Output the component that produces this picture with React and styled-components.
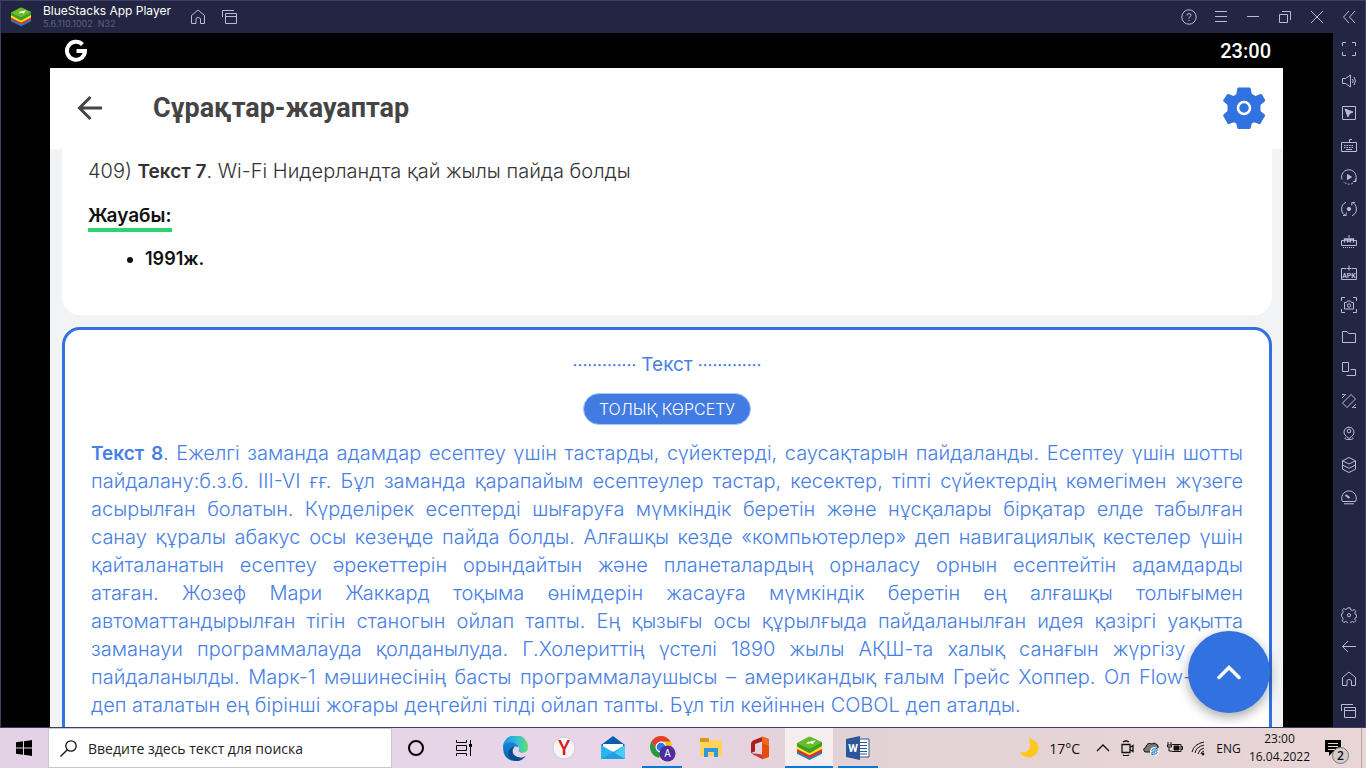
import React from "react";
import styled, { createGlobalStyle } from "styled-components";

const GlobalStyle = createGlobalStyle`
  * { box-sizing: border-box; }
  html, body, #root { height: 100%; }
  body { margin: 0; overflow: hidden; font-family: Inter, "Liberation Sans", sans-serif; }
  button { font: inherit; color: inherit; border: 0; background: none; padding: 0; margin: 0; cursor: pointer; }
  svg { display: block; flex: none; }
`;

const Desktop = styled.div`
  display: flex;
  flex-direction: column;
  height: 100vh;
`;

const EmulatorWindow = styled.div`
  flex: 1;
  min-height: 0;
  display: flex;
  flex-direction: column;
  background: #232642;
  border: 1px solid #3b3f63;
`;

const TitleBar = styled.header`
  display: flex;
  align-items: center;
  height: 32px;
  flex: none;
  color: #b9bbd6;
`;

const Brand = styled.div`
  display: flex;
  align-items: center;
  gap: 12px;
  padding-left: 10px;
  width: 181px;
`;

const BrandName = styled.h1`
  margin: 0;
  font: 400 12px/14px Inter, sans-serif;
  color: #fff;
  white-space: nowrap;
`;

const BrandVersion = styled.p`
  margin: 0;
  font: 400 9px/12px Inter, sans-serif;
  color: #5b5f86;
`;

const WindowControls = styled.div`
  display: flex;
  margin-left: auto;
`;

const IconButton = styled.button`
  display: flex;
  align-items: center;
  justify-content: center;
  width: 32px;
  height: 32px;
  color: #b9bbd6;
`;

const WindowBody = styled.div`
  flex: 1;
  min-height: 0;
  display: flex;
`;

const SideBar = styled.nav`
  display: flex;
  flex-direction: column;
  justify-content: space-between;
  width: 32px;
  flex: none;
`;

const SideGroup = styled.div`
  display: flex;
  flex-direction: column;
`;

const DeviceFrame = styled.div`
  flex: 1;
  min-width: 0;
  display: flex;
  padding: 0 50px 0 49px;
  background: #000;
`;

const Device = styled.main`
  position: relative;
  flex: 1;
  min-width: 0;
  display: flex;
  flex-direction: column;
  overflow: hidden;
  background: #f2f3f5;
`;

const StatusBar = styled.div`
  display: flex;
  align-items: center;
  justify-content: space-between;
  height: 35px;
  flex: none;
  padding: 0 12px 0 14px;
  background: #000;
  color: #fff;
  font: 500 20px/34px Roboto, sans-serif;
`;

const AppBar = styled.div`
  display: flex;
  align-items: center;
  height: 81px;
  flex: none;
  padding: 0 18px 2px 24px;
  background: #fff;
`;

const BackButton = styled.button`
  display: flex;
  align-items: center;
  justify-content: center;
  width: 32px;
  height: 40px;
`;

const AppTitle = styled.h2`
  margin: 0 auto 0 47px;
  font: 700 27px/32px Roboto, sans-serif;
  color: #444;
`;

const Feed = styled.div`
  flex: 1;
  min-height: 0;
  display: flex;
  flex-direction: column;
  gap: 12px;
  padding: 0 11px 0 12px;
  font-size: 20px;
  line-height: 28px;

  > * { flex: none; }
`;

const AnswerCard = styled.article`
  padding: 8px 26px 42px;
  background: #fff;
  border-radius: 0 0 18px 18px;
  color: #111;
`;

const Question = styled.p`
  margin: 0 0 17px;
  font-weight: 300;
  color: #333;

  strong { font-size: 19px; line-height: 20px; font-weight: 600; }
`;

const AnswerLabel = styled.h3`
  width: fit-content;
  margin: 0 0 13px;
  padding-top: 2px;
  font-size: 19px;
  line-height: 24px;
  font-weight: 600;
  border-bottom: 4px solid #2dd36f;
`;

const AnswerList = styled.ul`
  margin: 0;
  padding-left: 57px;
  font-size: 18px;
  font-weight: 600;
`;

const TextCard = styled.article`
  display: flex;
  flex-direction: column;
  align-items: center;
  gap: 14px;
  padding: 21px 26px 40px;
  background: #fff;
  border: 3px solid #3171e0;
  border-radius: 18px;
  color: #4880e4;
`;

const CardHeading = styled.h3`
  display: flex;
  gap: 5px;
  margin: 0;
  font-size: 19px;
  line-height: 28px;
  font-weight: 400;
`;

const Dots = styled.span`
  font-size: 17px;
`;

const ShowButton = styled.button`
  height: 32px;
  padding: 0 15px;
  border-radius: 16px;
  background: #427ce3;
  border: 1px solid #a9c4f4;
  color: #fff;
  font-size: 16px;
  line-height: 28px;
  font-weight: 300;
`;

const Passage = styled.p`
  align-self: stretch;
  margin: 0;
  font-weight: 300;

  strong { font-size: 19px; line-height: 20px; font-weight: 600; }
`;

const Line = styled.span`
  display: block;
  white-space: nowrap;
  text-align-last: ${(p) => (p.$last ? "left" : "justify")};
`;

const ScrollTop = styled.button`
  position: absolute;
  right: 13px;
  bottom: 14px;
  display: flex;
  align-items: center;
  justify-content: center;
  width: 82px;
  height: 82px;
  border-radius: 50%;
  background: #3171e0;
  box-shadow: 0 4px 12px rgba(0, 0, 0, 0.35);
`;

const TaskBar = styled.footer`
  display: flex;
  height: 40px;
  flex: none;
  background: linear-gradient(90deg, #e3d2e6 0%, #e8d5e8 45%, #e2d2d6 62%, #e9d5d6 100%);
  color: #111;
  font-family: "Open Sans", "Noto Sans", sans-serif;
`;

const TaskButton = styled.button`
  display: flex;
  align-items: center;
  justify-content: center;
  width: 48px;
  height: 40px;
  background: ${(p) => (p.$active ? "#f4eeee" : "transparent")};
`;

const SearchBox = styled.label`
  display: flex;
  align-items: center;
  gap: 11px;
  width: 344px;
  padding-left: 11px;
  background: #fff;
  border: 1px solid #c8c8c8;
`;

const SearchInput = styled.input`
  flex: 1;
  min-width: 0;
  height: 28px;
  padding: 0;
  border: 0;
  outline: 0;
  background: none;
  font: 400 14px/20px "Open Sans", "Noto Sans", sans-serif;

  &::placeholder { color: #222; opacity: 1; }
`;

const PinnedApps = styled.div`
  display: flex;
  gap: 1px;
  padding-left: 3px;
`;

const AppButton = styled(TaskButton)`
  position: relative;

  &::after {
    content: "";
    position: absolute;
    bottom: 0;
    left: ${(p) => (p.$active ? "0" : "4px")};
    right: ${(p) => (p.$active ? "0" : "4px")};
    height: 2px;
    background: ${(p) => (p.$running ? "#0a78d6" : "transparent")};
  }
`;

const Tray = styled.div`
  display: flex;
  align-items: center;
  margin-left: auto;
  font-size: 12px;
`;

const Weather = styled.button`
  display: flex;
  align-items: center;
  gap: 10px;
  padding-right: 11px;
  font-size: 14px;
`;

const TrayButton = styled.button`
  display: flex;
  align-items: center;
  justify-content: center;
  width: 24px;
  height: 40px;
`;

const Language = styled.button`
  width: 35px;
  height: 40px;
  font-size: 12px;
`;

const Clock = styled.button`
  width: 67px;
  font-size: 12px;
  line-height: 18px;
`;

const ShowDesktop = styled.button`
  width: 5px;
  height: 40px;
  border-left: 1px solid #b5a5a8;
`;

const Notifications = styled(TrayButton)`
  position: relative;
  width: 48px;
  padding-right: 8px;
`;

const Count = styled.span`
  position: absolute;
  right: 12px;
  bottom: 4px;
  width: 17px;
  height: 17px;
  border: 1px solid #777;
  border-radius: 50%;
  background: #d5cccc;
  font-size: 12px;
  font-weight: 600;
  line-height: 15px;
`;

/* Thin line icon on a 16px grid, used by the window chrome. */
const Glyph = ({ children, size = 16 }) => (
  <svg width={size} height={size} viewBox="0 0 16 16" fill="none" stroke="currentColor" strokeWidth="1" aria-hidden="true">
    {children}
  </svg>
);

const houseGlyph = <path d="M1.500 6.500 8 1l6.500 5.500V14.500h-4V10Q10 8.500 8 8.500T6 10v4.500H1.500Z" />;
const recentsGlyph = <path d="M.5 8V1.500H12M3.500 4.500h11v10h-11ZM3.500 7.500h11" />;

const sideTools = [
  ["Full screen", <path d="M1.500 5V1.500H5M11 1.500h3.500V5M14.500 11v3.500H11M5 14.500H1.500V11" />],
  ["Volume", <path d="M1.500 5.500h3L9.500 2v12l-5-3.500h-3ZM11.500 6q1.500 2 0 4M13 4q3 4 0 8" />],
  ["Lock cursor", <><path d="M1.500 1.500h13v13h-13Z" /><path d="m4 4 8 3-3.500 1.500L7 12Z" fill="currentColor" /></>],
  ["Game controls", <><path d="M.5 5.500h15v9H.500ZM8.500 5V2.500H11" /><path d="M3 8.500h10M3 10.500h10" strokeDasharray="1.500 1" /><path d="M5 12.500h6" /></>],
  ["Sync", <><path d="M1 10.500A7.300 7.300 0 1 1 14 12" /><path d="M12 14Q8 17 2 12.500" strokeDasharray="2 1.500" /><path d="M6.500 5.500v5L10.500 8Z" fill="currentColor" /><path d="M12 12.500h3v-3" /></>],
  ["Macro recorder", <><path d="M5 1.300A7.300 7.300 0 0 0 5 14.700M2 14.500h3.200v-3M11 14.700A7.300 7.300 0 0 0 11 1.300M14 1.500h-3.200v3" /><circle cx="8" cy="8" r="1.700" fill="currentColor" /></>],
  ["Multi instance sync", <><path d="M3 7.500H.5v5h15v-5H13M8 5V2" /><path d="M3.500 9.500V6h9v3.500M6.500 9.500V6M9.500 9.500V6M5 6v2M8 6v3M11 6v2" strokeWidth="1.300" /><path d="M2 14.500h12" strokeDasharray="1 1" /></>],
  ["Install APK", <><path d="M5 3.500H.5v11h15v-11H11M8 .5v5M5.500 3.500h5" /><text x="8" y="12.500" fontSize="7" fontWeight="700" fontFamily="Roboto" textAnchor="middle" fill="currentColor" stroke="none">APK</text></>],
  ["Screenshot", <><path d="M.5 4V.5H4M12 .5h3.500V4M15.500 12v3.500H12M4 15.500H.5V12M3.500 5.500h2l1-1.500h3l1 1.500h2v6.500h-9Z" /><circle cx="8" cy="8.500" r="1.700" /></>],
  ["Media folder", <path d="M1.500 13.500v-11H6L7.500 4.500h7v9Z" />],
  ["Multi instance", <path d="M1.500 1.500h6v9h-6ZM9.500 8.500h5v6h-9" />],
  ["Rotate", <path d="M10 1.500 14.500 6 6 14.500 1.500 10ZM1 5l4-4M1 1.500h2.500M11 15l4-4M12.500 14.500H15" />],
  ["Location", <><path d="M5.500 11.500A5 5 0 1 1 10.500 11.500L8 13.500ZM4.500 12.500q-2 2 3.500 2t3.500-2" /><circle cx="8" cy="6" r="1.800" /></>],
  ["Layers", <path d="m8 .5 6.500 3.300L8 7 1.500 3.800ZM1.500 3.800v8.400L8 15.500l6.500-3.300V3.800M1.500 8 8 11.300 14.500 8" />],
  ["Performance", <><path d="M1.500 12.500A7.300 7.300 0 1 1 14.500 12.500ZM3 14.800h10" /><path d="m4.500 6 4 3" strokeWidth="2" /></>],
];

const sideNavigation = [
  ["Settings", <><path d="M6.800.8h2.400l.5 2 1.700.7 1.700-1 1.700 1.700-1 1.700.7 1.700 1.200.3v2.400l-1.200.3-.7 1.500 1 1.700-1.700 1.700-1.700-1-1.700.7-.5 1.500H6.800l-.5-1.500-1.700-.7-1.700 1-1.700-1.700 1-1.700-.7-1.500L.5 9.100V6.900l1-.3.700-1.700-1-1.700 1.700-1.700 1.700 1 1.700-.7Z" strokeLinejoin="round" /><circle cx="8" cy="8.200" r="1.600" /></>],
  ["Back", <path d="M15 7.500H1.500M7 2 1.500 7.500 7 13" />],
  ["Home", houseGlyph],
  ["Recent apps", recentsGlyph],
];

const windowControls = [
  ["Help", <><circle cx="8" cy="8" r="7.200" /><path d="M6 6.500q0-2 2-2t2 1.700Q10 7.500 8 8.500v1M8 11v1" /></>],
  ["Menu", <path d="M2 2.500h12M2 7.500h12M2 12.500h12" />],
  ["Minimize", <path d="M2 7.500h12" />],
  ["Restore", <path d="M2.500 5.500h8v8h-8ZM5 2.500h8.500V11" />],
  ["Close", <path d="m2 2 12 12M14 2 2 14" />],
  ["Collapse sidebar", <path d="M8 2 2.500 8 8 14M14 2 8.500 8l5.500 6" />],
];

const BlueStacksLogo = ({ size }) => (
  <svg width={size} height={size} viewBox="0 0 24 24" aria-hidden="true">
    <path d="m0 14 12 6 12-6v3l-12 6-12-6Z" fill="#1783c9" />
    <path d="m0 11.500 12 6 12-6V15l-12 6-12-6Z" fill="#e92b31" />
    <path d="m0 9 12 6 12-6v3.500l-12 6-12-6Z" fill="#fbe51d" />
    <path d="M0 7 11 1q1-.5 2 0l11 5v3.500L13 16q-1 .5-2 0L0 10Z" fill="#3f9e23" />
    <path d="M0 7 11 1q1-.5 2 0l11 5-11 6q-1 .5-2 0Z" fill="#68bd2b" />
    <path d="m9 6 9-2-3 4-2-1-5 1 3-1.500Z" fill="#fff" />
  </svg>
);

const GoogleMark = () => (
  <svg width="24" height="24" viewBox="0 0 24 24" fill="none" stroke="#fff" strokeWidth="4" aria-label="Google">
    <path d="M18.500 5.500A9 9 0 1 0 21 12h-8.500" />
  </svg>
);

const SettingsGear = () => (
  <svg width="42" height="42" viewBox="0 0 42 42" aria-hidden="true">
    <path d="M15.500.5h11q1 0 1.200 1l1 5.300 3.800 2.200 5-1.900q1-.4 1.500.5l3 5.200q.5.900-.3 1.600L37.500 18v6l4.200 3.500q.8.700.3 1.600l-4.500 7.500q-.5.900-1.500.5l-5-1.900-2.300 1.300-1 4.500q-.2 1-1.200 1h-11q-1 0-1.200-1l-1-4.500L11 35.200 6 37.100q-1 .4-1.500-.5L.3 29q-.5-.9.3-1.600L4.500 24v-6L.6 14.500q-.8-.7-.3-1.600L4 7.500q.5-.9 1.500-.5l5 1.900 2.800-1.700 1-5.700q.2-1 1.200-1Z" fill="#3171e0" />
    <circle cx="21" cy="21" r="6" fill="none" stroke="#fff" strokeWidth="2.500" />
  </svg>
);

const EdgeLogo = () => (
  <svg width="25" height="25" viewBox="0 0 24 24">
    <defs>
      <linearGradient id="edgeTop" x1="0" x2="1"><stop stopColor="#1b91dd" /><stop offset=".6" stopColor="#36c3cf" /><stop offset="1" stopColor="#66df65" /></linearGradient>
      <linearGradient id="edgeBody" x2="0" y2="1"><stop stopColor="#1686da" /><stop offset="1" stopColor="#0a62b0" /></linearGradient>
    </defs>
    <path d="M0 11A12 12 0 0 1 24 11q0 5-6 5-4 0-3-2 1-5-3-5-7-2-12 2Z" fill="url(#edgeTop)" />
    <path d="M0 12q0-6 7-6 6 0 8 5Q9 8 9 14q1 7 9 7 2 0 4-2-4 5-10 5Q1 24 0 12Z" fill="url(#edgeBody)" />
    <path d="M11 10q-5 7 2 10 5 2 9-1-4 5-9 5-8-1-8-8 1-5 6-6Z" fill="#0b4c91" />
    <path d="M12 10.500q3.500-.5 3.200 2.500-1.200 2 .3 2.700 3 1.500 7 .3-2 3-6 2.800-6.500-.3-6.300-5.800.3-2 1.800-2.500Z" fill="#e7d6e7" />
  </svg>
);

const YandexLogo = () => (
  <svg width="24" height="24" viewBox="0 0 24 24">
    <circle cx="12" cy="12" r="11" fill="#f7f5f6" stroke="#d6cbd5" />
    <text x="12" y="19" textAnchor="middle" fontFamily="Roboto" fontWeight="500" fontSize="20" fill="#d8201f">Y</text>
  </svg>
);

const MailLogo = () => (
  <svg width="24" height="24" viewBox="0 0 24 24">
    <path d="M0 9 12 0l12 9v5H0Z" fill="#075ea9" />
    <path d="M2 8h20v7H2Z" fill="#fff" />
    <path d="m0 9 12 7 12-7v14H0Z" fill="#29b6ed" />
    <path d="M24 9 7 23h17Z" fill="#4bccf5" />
    <path d="m0 23 12-7 12 7Z" fill="#1f9fe0" />
  </svg>
);

const ChromeLogo = () => (
  <svg width="28" height="28" viewBox="0 0 28 28">
    <circle cx="13" cy="13" r="11" fill="#f9c20a" />
    <path d="M3.500 7.500A11 11 0 0 1 22.500 7.500H13Q8 8 8 14Z" fill="#e53c31" />
    <path d="M3.500 7.500 9 16q2 3 5 2l-3 5.800A11 11 0 0 1 3.500 7.500" fill="#229a4a" />
    <circle cx="13" cy="13" r="5.500" fill="#fff" />
    <circle cx="13" cy="13" r="4.300" fill="#2b78e8" />
    <circle cx="19.500" cy="19.500" r="8" fill="#4e2da0" />
    <text x="19.500" y="23" textAnchor="middle" fontFamily="Roboto" fontSize="10" fill="#fff">A</text>
  </svg>
);

const ExplorerLogo = () => (
  <svg width="22" height="22" viewBox="0 0 22 22">
    <path d="M0 1h9v4H0Z" fill="#d99a13" />
    <path d="M0 5h9l1-2h12v16H0Z" fill="#ffd45d" />
    <path d="M4 11h14v9h-4v-5H8v5H4Z" fill="#3395dc" />
  </svg>
);

const OfficeLogo = () => (
  <svg width="20" height="24" viewBox="0 0 20 24">
    <path d="M12 1 3 4.500Q1 5.500 1 8v9l4-1.500V8l7-2.500Z" fill="#a81f1e" />
    <path d="M1 17.500 12 23V18.500l-7-1Z" fill="#c33a42" />
    <path d="m12 .5 7 2.500v18l-7 2.500Z" fill="#e64a0e" />
    <path d="m12 .5 7 2.500v7l-7-3Z" fill="#ee6a20" />
  </svg>
);

const WordLogo = () => (
  <svg width="24" height="24" viewBox="0 0 24 24">
    <path d="M12 3h11v18H12Z" fill="#fff" stroke="#2b579a" />
    <path d="M14 6.500h7M14 9.500h7M14 12.500h7M14 15.500h7M14 18h7" stroke="#2b579a" />
    <path d="M0 3 14 0v24L0 21Z" fill="#2b579a" />
    <text x="7" y="16" textAnchor="middle" fontFamily="Roboto" fontWeight="700" fontSize="11" fill="#fff">W</text>
  </svg>
);

const pinned = [
  ["Microsoft Edge", <EdgeLogo />],
  ["Yandex Browser", <YandexLogo />],
  ["Mail", <MailLogo />],
  ["Google Chrome", <ChromeLogo />, true],
  ["Explorer", <ExplorerLogo />],
  ["Office", <OfficeLogo />],
  ["BlueStacks", <BlueStacksLogo size={25} />, true, true],
  ["Word", <WordLogo />, true],
];

const trayIcons = [
  ["Show hidden icons", <path d="m2 11 6-6 6 6" strokeWidth="1.400" />],
  ["Meet now", <path d="M3 4.500h8v8H3ZM11 7.500l3-2v6l-3-2M4 2q3-2 6 0M4 15q3 1.500 6 0" strokeWidth="1.300" />],
  ["OneDrive", <><path d="M2 12q-3-3 1-5 1-5 6-3 2-2 4 0 3 1 2 4l-4 4Z" fill="#777" /><circle cx="11.500" cy="11.500" r="4.500" fill="#e8f4fc" stroke="none" /><path d="M8.500 11q1-3 4.500-2l1-1v3h-3M14.500 12q-1 3-4.500 2l-1 1v-3h3" stroke="#0b73c9" /></>],
  ["Battery", <><path d="M5 4.500h9v7H5M14 6.500h1.500v3H14M2 7v4h3M1 2v3M4 2v3M.5 5h4v2h-4Z" /><path d="M7 6h5v4H7Z" fill="currentColor" /></>],
  ["Network", <><path d="M1 12Q3 4 13 2M4 13q1-6 9-8M7 14q1-5 6-6M10 14q0-2 3-3" /><circle cx="12" cy="14" r="1" fill="currentColor" /></>],
];

const passageLines = [
  <><strong>Текст 8</strong>. Ежелгі заманда адамдар есептеу үшін тастарды, сүйектерді, саусақтарын пайдаланды. Есептеу үшін шотты</>,
  "пайдалану:б.з.б. III-VI ғғ. Бұл заманда қарапайым есептеулер тастар, кесектер, тіпті сүйектердің көмегімен жүзеге",
  "асырылған болатын. Күрделірек есептерді шығаруға мүмкіндік беретін және нұсқалары бірқатар елде табылған",
  "санау құралы абакус осы кезеңде пайда болды. Алғашқы кезде «компьютерлер» деп навигациялық кестелер үшін",
  "қайталанатын есептеу әрекеттерін орындайтын және планеталардың орналасу орнын есептейтін адамдарды",
  "атаған. Жозеф Мари Жаккард тоқыма өнімдерін жасауға мүмкіндік беретін ең алғашқы толығымен",
  "автоматтандырылған тігін станогын ойлап тапты. Ең қызығы осы құрылғыда пайдаланылған идея қазіргі уақытта",
  "заманауи программалауда қолданылуда. Г.Холериттің үстелі 1890 жылы АҚШ-та халық санағын жүргізу үшін",
  "пайдаланылды. Марк-1 мәшинесінің басты программалаушысы – американдық ғалым Грейс Хоппер. Ол Flow-Matic",
  "деп аталатын ең бірінші жоғары деңгейлі тілді ойлап тапты. Бұл тіл кейіннен COBOL деп аталды.",
];

const GlyphButton = ({ label, children }) => (
  <IconButton aria-label={label}><Glyph>{children}</Glyph></IconButton>
);

export default function App() {
  return (
    <Desktop>
      <GlobalStyle />
      <EmulatorWindow>
        <TitleBar>
          <Brand>
            <BlueStacksLogo size={20} />
            <div>
              <BrandName>BlueStacks App Player</BrandName>
              <BrandVersion>5.6.110.1002&nbsp; N32</BrandVersion>
            </div>
          </Brand>
          <GlyphButton label="Home">{houseGlyph}</GlyphButton>
          <GlyphButton label="Recent apps">{recentsGlyph}</GlyphButton>
          <WindowControls>
            {windowControls.map(([label, glyph]) => <GlyphButton key={label} label={label}>{glyph}</GlyphButton>)}
          </WindowControls>
        </TitleBar>
        <WindowBody>
          <DeviceFrame>
            <Device>
              <StatusBar><GoogleMark /><time>23:00</time></StatusBar>
              <AppBar>
                <BackButton aria-label="Артқа">
                  <svg width="26" height="26" viewBox="0 0 26 26" fill="none" stroke="#444" strokeWidth="3"><path d="M25 13H3M13.500 2 2.500 13l11 11" /></svg>
                </BackButton>
                <AppTitle>Сұрақтар-жауаптар</AppTitle>
                <button aria-label="Баптаулар"><SettingsGear /></button>
              </AppBar>
              <Feed>
                <AnswerCard>
                  <Question>409) <strong>Текст 7</strong>. Wi-Fi Нидерландта қай жылы пайда болды</Question>
                  <AnswerLabel>Жауабы:</AnswerLabel>
                  <AnswerList><li>1991ж.</li></AnswerList>
                </AnswerCard>
                <TextCard>
                  <CardHeading>
                    <Dots>·············</Dots>
                    <span>Текст</span>
                    <Dots>·············</Dots>
                  </CardHeading>
                  <ShowButton>ТОЛЫҚ КӨРСЕТУ</ShowButton>
                  <Passage>
                    {passageLines.map((line, i) => (
                      <Line key={i} $last={i === passageLines.length - 1}>{line}</Line>
                    ))}
                  </Passage>
                </TextCard>
              </Feed>
              <ScrollTop aria-label="Жоғары">
                <svg width="24" height="24" viewBox="0 0 24 24" fill="none" stroke="#fff" strokeWidth="3.500" strokeLinecap="round"><path d="M2 17.500 12 7.500l10 10" /></svg>
              </ScrollTop>
            </Device>
          </DeviceFrame>
          <SideBar>
            <SideGroup>{sideTools.map(([label, glyph]) => <GlyphButton key={label} label={label}>{glyph}</GlyphButton>)}</SideGroup>
            <SideGroup>{sideNavigation.map(([label, glyph]) => <GlyphButton key={label} label={label}>{glyph}</GlyphButton>)}</SideGroup>
          </SideBar>
        </WindowBody>
      </EmulatorWindow>
      <TaskBar>
        <TaskButton aria-label="Пуск">
          <svg width="16" height="16" viewBox="0 0 16 16"><path d="M0 2.300 7 1.300V7.500H0ZM8 1.200 16 0v7.500H8ZM0 8.500h7v6.200l-7-1ZM8 8.500h8V16l-8-1.200Z" /></svg>
        </TaskButton>
        <SearchBox>
          <svg width="17" height="17" viewBox="0 0 17 17" fill="none" stroke="#111" strokeWidth="1.300"><circle cx="11" cy="6" r="5.200" /><path d="M7.300 9.700.5 16.500" /></svg>
          <SearchInput aria-label="Поиск" placeholder="Введите здесь текст для поиска" />
        </SearchBox>
        <TaskButton aria-label="Cortana">
          <svg width="16" height="16" viewBox="0 0 16 16" fill="none" stroke="#000" strokeWidth="2"><circle cx="8" cy="8" r="7" /></svg>
        </TaskButton>
        <TaskButton aria-label="Task view">
          <svg width="16" height="16" viewBox="0 0 16 16" fill="none" stroke="#000"><path d="M.5 0v2.500h10V0M.5 5.500h10v5H.5ZM.5 16v-2.500h10V16M14.500 0v16" /><path d="M13 4h3v3h-3Z" fill="#000" stroke="none" /></svg>
        </TaskButton>
        <PinnedApps>
          {pinned.map(([label, logo, running, active]) => (
            <AppButton key={label} aria-label={label} $running={running} $active={active}>{logo}</AppButton>
          ))}
        </PinnedApps>
        <Tray>
          <Weather>
            <svg width="20" height="20" viewBox="0 0 20 20"><path d="M10 0q12 4 9 13-4 8-12 6-4-1-6-5 7 1 9-3 2-4 0-11Z" fill="#fdc71f" /></svg>
            17°C
          </Weather>
          {trayIcons.map(([label, glyph]) => (
            <TrayButton key={label} aria-label={label}><Glyph>{glyph}</Glyph></TrayButton>
          ))}
          <Language>ENG</Language>
          <Clock>23:00<br />16.04.2022</Clock>
          <Notifications aria-label="Уведомления">
            <svg width="18" height="18" viewBox="0 0 18 18"><path d="M1 1h16v12H9l-4 4v-4H1Z" /><path d="M4 4.500h10M4 7.500h10M4 10.500h7" stroke="#e8d5d5" /></svg>
            <Count>2</Count>
          </Notifications>
          <ShowDesktop aria-label="Свернуть все окна" />
        </Tray>
      </TaskBar>
    </Desktop>
  );
}
